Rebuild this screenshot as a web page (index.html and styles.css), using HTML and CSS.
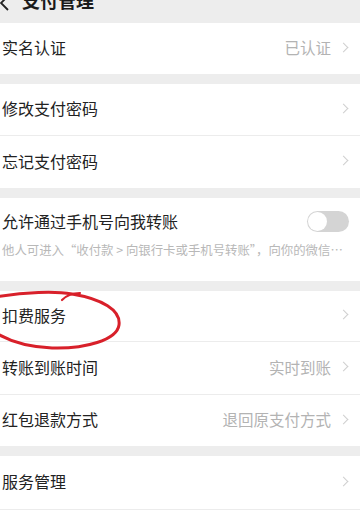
FILE: index.html
```html
<!DOCTYPE html>
<html lang="zh">
<head>
<meta charset="utf-8">
<link rel="stylesheet" href="styles.css">
</head>
<body>
<div class="page">
  <div class="header">
    <svg class="back" width="12" height="14" viewBox="0 0 12 14"><polyline points="8,-4 1,3 8,10" fill="none" stroke="#222" stroke-width="1.8"/></svg>
    <span class="title">支付管理</span>
  </div>

  <div class="group">
    <div class="row h51"><span class="label">实名认证</span><span class="value">已认证</span><i class="chev"></i></div>
  </div>

  <div class="group">
    <div class="row h51"><span class="label">修改支付密码</span><i class="chev"></i></div>
    <div class="row h53"><span class="label">忘记支付密码</span><i class="chev"></i></div>
  </div>

  <div class="group">
    <div class="trow">
      <div class="tline"><span class="label">允许通过手机号向我转账</span><span class="switch"><span class="knob"></span></span></div>
      <div class="sub">他人可进入“收付款 &gt; 向银行卡或手机号转账”，向你的微信…</div>
    </div>
  </div>

  <div class="group">
    <div class="row h50"><span class="label">扣费服务</span><i class="chev"></i></div>
    <div class="row h53"><span class="label">转账到账时间</span><span class="value">实时到账</span><i class="chev"></i></div>
    <div class="row h52"><span class="label">红包退款方式</span><span class="value">退回原支付方式</span><i class="chev"></i></div>
  </div>

  <div class="group g-last">
    <div class="row h53"><span class="label">服务管理</span><i class="chev"></i></div>
    <div class="row h52"></div>
  </div>

  <svg class="circle" width="130" height="80" viewBox="0 0 130 80">
    <path d="M-4,17 C25,12 55,11 72,14 C102,19 121,30 119,45 C117,60 85,69 52,68 C27,67 9,61 -4,53" fill="none" stroke="#d8202a" stroke-width="3" stroke-linecap="round"/>
    <path d="M62,20 C66,16 72,13 80,13" fill="none" stroke="#d8202a" stroke-width="2.2" stroke-linecap="round"/>
  </svg>
</div>
</body>
</html>
```

FILE: styles.css
```css
html, body {
  margin: 0;
  padding: 0;
  background: #ededed;
}
body {
  font-family: "Noto Sans CJK SC", "Noto Sans", sans-serif;
  color: #222;
  width: 360px;
  height: 523px;
  overflow: hidden;
}
.page {
  position: relative;
  width: 360px;
  height: 523px;
  overflow: hidden;
}
.header {
  height: 23px;
  display: flex;
  align-items: flex-start;
  overflow: hidden;
  background: #ededed;
}
.back {
  display: block;
}
.title {
  font-size: 18px;
  font-weight: bold;
  line-height: 20px;
  margin-top: -10px;
  margin-left: 10px;
  color: #1a1a1a;
}
.group {
  background: #fff;
  margin-bottom: 10px;
}
.group.g-last {
  margin-top: 2px;
}
.row {
  box-sizing: border-box;
  display: flex;
  align-items: center;
  padding: 0 11px 3px 2px;
}
.h50 { height: 50px; }
.h51 { height: 51px; }
.h52 { height: 52px; }
.h53 { height: 53px; }
.row + .row {
  border-top: 1px solid #ececec;
}
.label {
  font-size: 16px;
  color: #222;
  flex: 1;
  white-space: nowrap;
}
.value {
  font-size: 15.5px;
  color: #b3b3b3;
  margin-right: 9px;
}
.chev {
  display: block;
  width: 6px;
  height: 6px;
  border-top: 1.5px solid #cfcfcf;
  border-right: 1.5px solid #cfcfcf;
  transform: rotate(45deg);
  margin-right: 2px;
}
.trow {
  box-sizing: border-box;
  height: 83px;
  padding: 12px 0 0 2px;
}
.tline {
  display: flex;
  align-items: center;
  height: 22px;
  padding-right: 11px;
}
.switch {
  position: relative;
  display: block;
  width: 42px;
  height: 21px;
  border-radius: 11px;
  background: #d4d4d4;
}
.knob {
  position: absolute;
  left: 1px;
  top: 1px;
  width: 19px;
  height: 19px;
  border-radius: 50%;
  background: #fff;
}
.sub {
  margin-top: 9px;
  font-size: 12.4px;
  line-height: 18px;
  color: #b8b8b8;
  white-space: nowrap;
}
.circle {
  position: absolute;
  left: 0;
  top: 280px;
}
```
